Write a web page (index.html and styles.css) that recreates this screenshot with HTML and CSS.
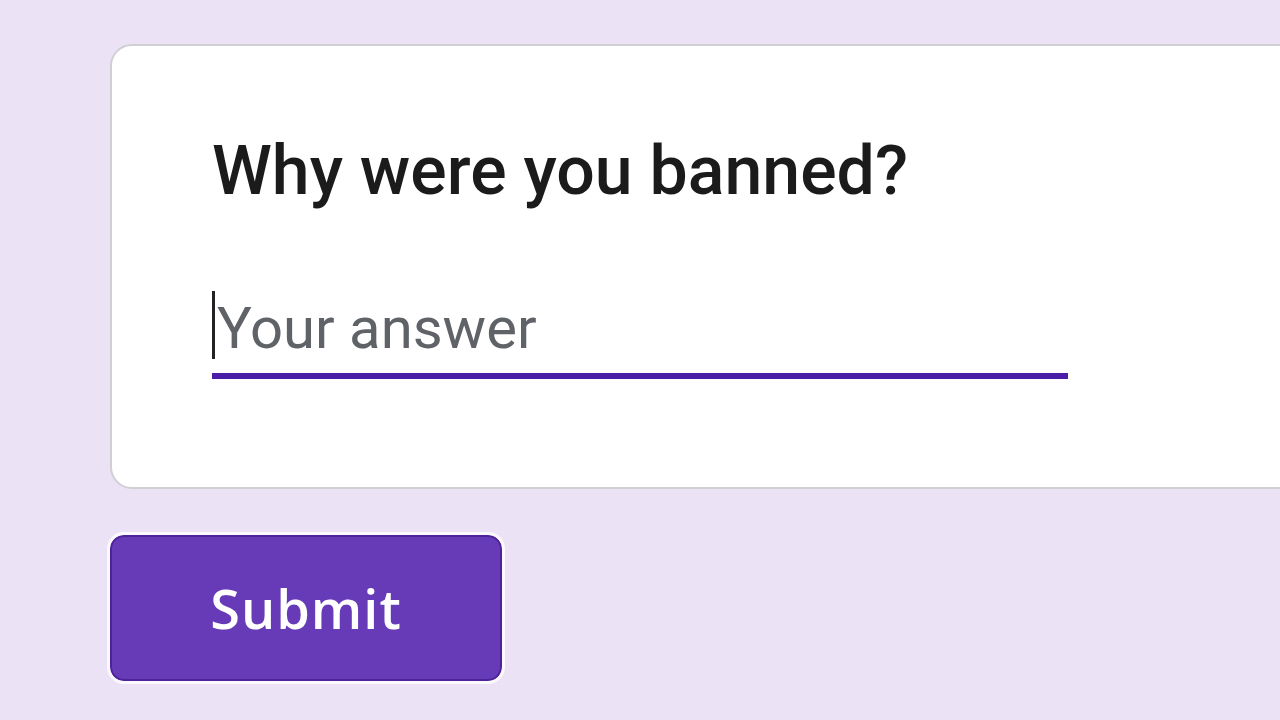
FILE: index.html
```html
<!DOCTYPE html>
<html lang="en">
<head>
    <meta charset="UTF-8">
    <meta name="viewport" content="width=device-width, initial-scale=1.0">
    <title>Why were you banned?</title>
    <link rel="stylesheet" href="styles.css">
</head>
<body>
    <div class="page">
        <div class="question-card">
            <h1 class="question-title">Why were you banned?</h1>
            <div class="answer-field">
                <span class="caret"></span>
                <span class="placeholder">Your answer</span>
            </div>
        </div>
        <div class="actions">
            <button class="submit-btn" type="button">Submit</button>
        </div>
    </div>
</body>
</html>
```

FILE: styles.css
```css
html, body {
    margin: 0;
    padding: 0;
    height: 100%;
    overflow: hidden;
    background-color: #ebe3f5;
}
.page {
    padding: 44px 0 0 110px;
    font-family: Roboto, "Liberation Sans", sans-serif;
}
.question-card {
    width: 1220px;
    height: 445px;
    box-sizing: border-box;
    background: #fff;
    border: 2px solid #d0cfd3;
    border-radius: 22px;
    padding: 90px 0 0 100px;
}
.question-title {
    margin: 0;
    font-family: Roboto, "Liberation Sans", sans-serif;
    font-size: 68px;
    font-weight: 500;
    line-height: 70px;
    color: #1b1b1b;
    letter-spacing: 0;
}
.answer-field {
    margin-top: 85px;
    width: 856px;
    border-bottom: 6px solid #4a1ea6;
    padding-bottom: 14px;
    display: flex;
    align-items: center;
}
.caret {
    width: 3px;
    height: 68px;
    background: #222;
    margin-right: 2px;
}
.placeholder {
    font-size: 58px;
    line-height: 68px;
    color: #5f6368;
    transform: translateY(3px);
}
.actions {
    margin-top: 46px;
}
.submit-btn {
    width: 392px;
    height: 146px;
    background: #673ab7;
    border: 2px solid #4d2399;
    outline: 3px solid #fbf9fe;
    border-radius: 14px;
    color: #fff;
    font-family: "Open Sans", Roboto, sans-serif;
    font-size: 54px;
    font-weight: 600;
    letter-spacing: 1px;
    cursor: pointer;
}
```
